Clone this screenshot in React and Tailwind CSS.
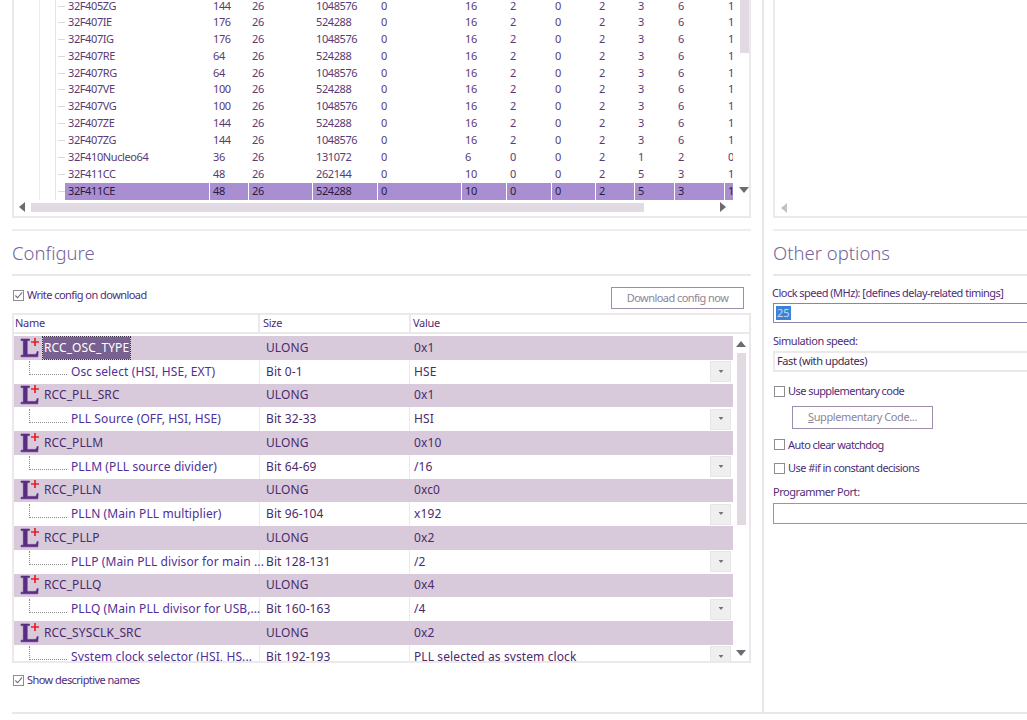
const font = "font-['Noto_Sans','Open_Sans',sans-serif]";
const colWidths = ['w-[145px]', 'w-[39px]', 'w-[64px]', 'w-[65px]', 'w-[84px]', 'w-[45px]', 'w-[45px]', 'w-[44px]', 'w-[39px]', 'w-[40px]', 'w-[50px]', 'w-[9px]'];

const chips = [
  ['32F405ZG', '144', '26', '1048576', '0', '16', '2', '0', '2', '3', '6', '1'],
  ['32F407IE', '176', '26', '524288', '0', '16', '2', '0', '2', '3', '6', '1'],
  ['32F407IG', '176', '26', '1048576', '0', '16', '2', '0', '2', '3', '6', '1'],
  ['32F407RE', '64', '26', '524288', '0', '16', '2', '0', '2', '3', '6', '1'],
  ['32F407RG', '64', '26', '1048576', '0', '16', '2', '0', '2', '3', '6', '1'],
  ['32F407VE', '100', '26', '524288', '0', '16', '2', '0', '2', '3', '6', '1'],
  ['32F407VG', '100', '26', '1048576', '0', '16', '2', '0', '2', '3', '6', '1'],
  ['32F407ZE', '144', '26', '524288', '0', '16', '2', '0', '2', '3', '6', '1'],
  ['32F407ZG', '144', '26', '1048576', '0', '16', '2', '0', '2', '3', '6', '1'],
  ['32F410Nucleo64', '36', '26', '131072', '0', '6', '0', '0', '2', '1', '2', '0'],
  ['32F411CC', '48', '26', '262144', '0', '10', '0', '0', '2', '5', '3', '1'],
  ['32F411CE', '48', '26', '524288', '0', '10', '0', '0', '2', '5', '3', '1'],
];

const registers = [
  ['RCC_OSC_TYPE', '0x1', 'Osc select (HSI, HSE, EXT)', 'Bit 0-1', 'HSE'],
  ['RCC_PLL_SRC', '0x1', 'PLL Source (OFF, HSI, HSE)', 'Bit 32-33', 'HSI'],
  ['RCC_PLLM', '0x10', 'PLLM (PLL source divider)', 'Bit 64-69', '/16'],
  ['RCC_PLLN', '0xc0', 'PLLN (Main PLL multiplier)', 'Bit 96-104', 'x192'],
  ['RCC_PLLP', '0x2', 'PLLP (Main PLL divisor for main ...', 'Bit 128-131', '/2'],
  ['RCC_PLLQ', '0x4', 'PLLQ (Main PLL divisor for USB,...', 'Bit 160-163', '/4'],
  ['RCC_SYSCLK_SRC', '0x2', 'System clock selector (HSI, HS...', 'Bit 192-193', 'PLL selected as system clock'],
];

function Arrow({ dir, className = '' }) {
  const points = { up: '0,7 10,7 5,1', down: '0,1 10,1 5,7', left: '7,0 7,10 1,5', right: '1,0 1,10 7,5' };
  return (
    <svg viewBox="0 0 10 10" className={`w-[10px] h-[10px] shrink-0 ${className}`}>
      <polygon points={points[dir]} fill="currentColor" />
    </svg>
  );
}

function RegIcon() {
  return (
    <svg viewBox="0 0 22 22" className="w-[22px] h-[22px] shrink-0">
      <path d="M2 2h8.500v1.600H8.200V17.400h7.600c1.200 0 1.900-.9 2.300-3l1.100.2-.4 5.200H2v-1.600h2.300V3.600H2z" fill="#5b2c83" stroke="#5b2c83" strokeWidth="0.6" />
      <path d="M16 1v8M12 5h8" stroke="#e8202c" strokeWidth="1.700" fill="none" />
    </svg>
  );
}

function Check({ checked }) {
  return (
    <span className="w-[11px] h-[11px] border border-[#8f8a94] bg-white shrink-0 flex items-center justify-center">
      {checked && (
        <svg viewBox="0 0 10 10" className="w-[9px] h-[9px]">
          <path d="M1.500 5l2.500 2.500 5-6" stroke="#6f6a75" strokeWidth="1.200" fill="none" />
        </svg>
      )}
    </span>
  );
}

function CheckRow({ label, checked, className = '' }) {
  return (
    <div className={`flex items-center gap-[3px] text-[11px] tracking-[-0.55px] text-[#4f2d78] ${className}`}>
      <Check checked={checked} />
      <span>{label}</span>
    </div>
  );
}

function ChipRow({ cells, selected, first }) {
  return (
    <div className={`flex shrink-0 ${first ? 'h-[13.9px]' : 'h-[16.9px]'}`}>
      <div className="w-[26px] border-r border-[#efecef] shrink-0" />
      <div className="w-[16px] border-r border-[#e6e3e6] shrink-0" />
      <div className="w-[9px] shrink-0 flex items-center justify-end">
        <div className="w-[7px] h-px bg-[#dcd9dc]" />
      </div>
      {cells.map((c, i) => (
        <div
          key={i}
          className={`${colWidths[i]} shrink-0 pl-[3px] border-r border-white whitespace-nowrap ${first ? 'leading-[11px]' : 'leading-[16.9px] overflow-hidden'} ${selected ? 'bg-[#a98fd2] text-[#2a1c3c]' : 'text-[#5a3a72]'}`}
        >
          {c}
        </div>
      ))}
    </div>
  );
}

function RegisterRows({ reg, first }) {
  const [name, value, desc, bits, option] = reg;
  return (
    <>
      <div className="flex h-[23.75px] shrink-0 bg-[#d8cadb] items-center text-[#4a2a6c] tracking-[0.1px]">
        <div className="w-[246px] shrink-0 flex items-center pl-[5px] gap-[3px]">
          <RegIcon />
          <span className={first ? 'bg-[#78618f] text-white outline-1 outline-dotted outline-[#3c3048] h-[22px] leading-[22px] px-[1px] -ml-[1px]' : ''}>{name}</span>
        </div>
        <div className="w-[150px] shrink-0 pl-[6px]">ULONG</div>
        <div className="pl-[4px]">{value}</div>
      </div>
      <div className="flex h-[23.75px] shrink-0 items-center text-[#4a2a6c] tracking-[0.1px]">
        <div className="w-[246px] h-full shrink-0 flex items-center border-r border-[#ece8ec]">
          <div className="w-[15px] shrink-0" />
          <div className="w-[38px] h-[14px] mb-[7px] shrink-0 border-l border-b border-dotted border-[#8c8a8c]" />
          <span className="pl-[4px] text-[#4f2f9a] whitespace-nowrap">{desc}</span>
        </div>
        <div className="w-[150px] h-full shrink-0 pl-[6px] flex items-center border-r border-[#ece8ec]">{bits}</div>
        <div className="flex-1 pl-[4px]">{option}</div>
        <div className="w-[21px] h-[21px] mr-[2px] shrink-0 bg-[#efefef] border border-[#e6e6e6] flex items-center justify-center text-[#77727a]">
          <Arrow dir="down" className="scale-50" />
        </div>
      </div>
    </>
  );
}

export default function App() {
  return (
    <div className={`${font} w-[1027px] h-[720px] overflow-hidden bg-white text-[12px]`}>
      <div className="flex h-[712px]">
        {/* left column */}
        <div className="w-[764px] shrink-0 border-r-2 border-[#eae6ea] pl-3 pr-[11px] flex flex-col">
          <div className="h-[218px] shrink-0 border-x-2 border-b-2 border-[#ece8ec] flex flex-col text-[11px] tracking-[-0.4px]">
            <div className="flex h-[200px] overflow-hidden">
              <div className="w-[723px] shrink-0 flex flex-col">
                {chips.map((cells, i) => (
                  <ChipRow key={cells[0]} cells={cells} first={i === 0} selected={i === chips.length - 1} />
                ))}
              </div>
              <div className="w-[10px] ml-[2px] shrink-0 flex flex-col items-center">
                <div className="w-[9px] h-[53px] shrink-0 bg-[#e2dae2]" />
                <Arrow dir="down" className="mt-auto mb-[4px] text-[#6e6a72]" />
              </div>
            </div>
            <div className="flex items-center h-[14px] pl-[4px] pr-[20px] text-[#6e6a72]">
              <Arrow dir="left" />
              <div className="ml-[3px] w-[613px] h-[9px] bg-[#e2dae2]" />
              <div className="flex-1" />
              <Arrow dir="right" />
            </div>
          </div>
          <div className="mt-[11px] h-[2px] shrink-0 bg-[#f0ecf0]" />
          <div className="h-[45px] shrink-0 border-b-2 border-[#eae6ea] flex items-center text-[18.5px] font-light text-[#73659c]">Configure</div>
          <div className="h-[36px] shrink-0 flex justify-between items-center">
            <CheckRow label="Write config on download" checked className="mt-[2px] pl-px" />
            <button className="w-[133px] h-[22px] mr-[7px] mt-[8px] border border-[#9c8eaa] text-[11px] tracking-[-0.55px] text-[#8d8599]">Download config now</button>
          </div>
          <div className="mt-[1px] h-[350px] shrink-0 border-2 border-[#ece8ec] overflow-hidden flex flex-col">
            <div className="h-[19px] shrink-0 flex text-[11px] tracking-[-0.3px] text-[#4f2d78] leading-[16px] border-b-2 border-[#ece8ec]">
              <div className="w-[246px] shrink-0 pl-[1px] border-r-2 border-[#ece8ec]">Name</div>
              <div className="w-[151px] shrink-0 pl-[3px] border-r-2 border-[#ece8ec]">Size</div>
              <div className="pl-[2px]">Value</div>
            </div>
            <div className="flex flex-1 mt-[2px] overflow-hidden">
              <div className="w-[719px] shrink-0 flex flex-col">
                {registers.map((r, i) => (
                  <RegisterRows key={r[0]} reg={r} first={i === 0} />
                ))}
              </div>
              <div className="flex-1 flex flex-col items-center pt-[4px] text-[#6e6a72]">
                <Arrow dir="up" />
                <div className="w-[9px] h-[172px] mt-[3px] bg-[#e2dae2]" />
                <Arrow dir="down" className="mt-auto mb-[2px]" />
              </div>
            </div>
          </div>
          <CheckRow label="Show descriptive names" checked className="mt-[9px] pl-px" />
        </div>
        {/* right column */}
        <div className="flex-1 pl-[9px] flex flex-col">
          <div className="h-[218px] w-[300px] shrink-0 border-l-2 border-b-2 border-[#ece8ec] flex items-end pl-[5px] pb-[3px] text-[#c4c0c8]">
            <Arrow dir="left" />
          </div>
          <div className="mt-[11px] h-[2px] w-[300px] shrink-0 bg-[#f0ecf0]" />
          <div className="h-[45px] w-[300px] shrink-0 border-b-2 border-[#eae6ea] flex items-center text-[18.5px] font-light text-[#73659c]">Other options</div>
          <div className="mt-[9px] -ml-px text-[11px] tracking-[-0.52px] text-[#4f2d78] whitespace-nowrap">Clock speed (MHz): [defines delay-related timings]</div>
          <div className="mt-[1px] h-[20px] w-[300px] shrink-0 border border-[#8d84ad] flex items-center pl-[2px] text-[11px]">
            <span className="bg-[#3b83d8] text-[#c9d9ee] px-[1px] leading-[14px]">25</span>
          </div>
          <div className="mt-[10px] text-[11px] tracking-[-0.45px] text-[#4f2d78]">Simulation speed:</div>
          <div className="mt-[2px] h-[21px] w-[300px] shrink-0 border-2 border-[#ece8ec] flex items-center pl-[2px] text-[11px] tracking-[-0.4px] text-[#3d2a55]">Fast (with updates)</div>
          <CheckRow label="Use supplementary code" className="mt-[11px] pl-[1px]" />
          <button className="ml-[19px] mt-[6px] w-[141px] h-[23px] shrink-0 border border-[#9c8eaa] text-[11px] tracking-[-0.4px] text-[#8d8599]">
            <span className="underline">S</span>upplementary Code...
          </button>
          <CheckRow label="Auto clear watchdog" className="mt-[8px] pl-[1px]" />
          <CheckRow label="Use #if in constant decisions" className="mt-[7px] pl-[1px]" />
          <div className="mt-[7px] text-[11px] tracking-[-0.45px] text-[#4f2d78]">Programmer Port:</div>
          <div className="mt-[3px] h-[21px] w-[300px] shrink-0 border border-[#9a94a4]" />
        </div>
      </div>
      <div className="ml-3 h-[2px] bg-[#eae6ea]" />
    </div>
  );
}
